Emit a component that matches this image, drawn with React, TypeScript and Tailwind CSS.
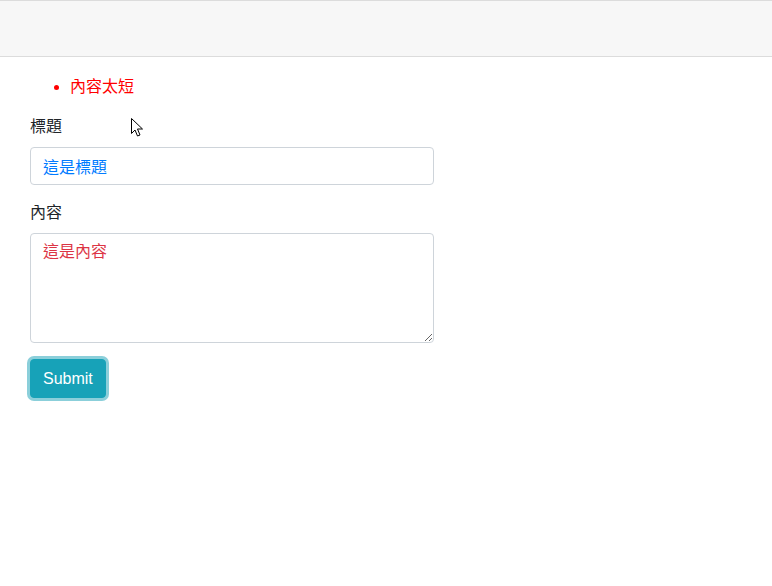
const FONT = '"Liberation Sans", Arial, "Noto Sans CJK TC", sans-serif';

function Cursor() {
  return (
    <svg
      className="absolute left-[131px] top-[118px] pointer-events-none"
      width="13"
      height="20"
      viewBox="0 0 13 20"
    >
      <path
        d="M0.5 0.5 L0.5 15.5 L4 12 L6.5 18 L9 17 L6.5 11 L11.5 11 Z"
        fill="#fff"
        stroke="#000"
        strokeWidth="1"
        strokeLinejoin="miter"
      />
    </svg>
  );
}

export default function App() {
  return (
    <div
      className="relative min-h-[586px] bg-white text-[16px] leading-6 text-[#212529]"
      style={{ fontFamily: FONT }}
    >
      {/* top navbar */}
      <div className="h-[57px] bg-[#f7f7f7] border-t border-b border-[#dcdcdc]" />

      <div className="px-[30px] pt-[18px]">
        <ul className="list-disc pl-[40px] mb-4 text-[#ff0000]">
          <li>內容太短</li>
        </ul>

        <form className="w-[404px]" onSubmit={(e) => e.preventDefault()}>
          <div className="mb-4">
            <label className="block mb-2">標題</label>
            <input
              type="text"
              defaultValue="這是標題"
              className="block w-full h-[38px] px-3 py-[6px] border border-[#ced4da] rounded-[4px] text-[#007bff] outline-none"
              style={{ fontFamily: FONT }}
            />
          </div>
          <div className="mb-4">
            <label className="block mb-2">內容</label>
            <textarea
              rows={4}
              defaultValue="這是內容"
              className="block w-full h-[110px] px-3 py-[6px] border border-[#ced4da] rounded-[4px] text-[#dc3545] outline-none"
              style={{ fontFamily: FONT }}
            />
          </div>
          <button
            type="submit"
            className="h-[39px] px-3 bg-[#17a2b8] text-white rounded-[4px] border border-[#17a2b8] ring-[3px] ring-[#8bcfda]"
            style={{ fontFamily: FONT }}
          >
            Submit
          </button>
        </form>
      </div>

      <Cursor />
    </div>
  );
}
